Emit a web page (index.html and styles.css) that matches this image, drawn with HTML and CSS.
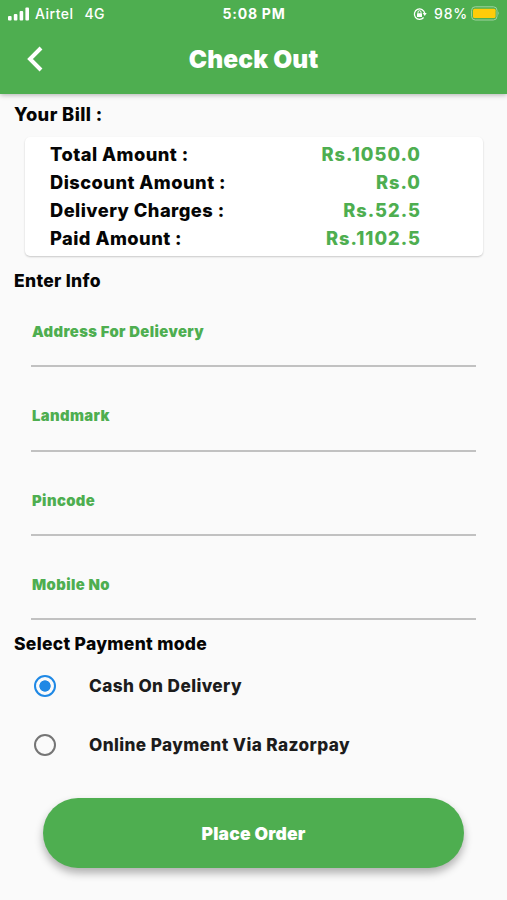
FILE: index.html
```html
<!DOCTYPE html>
<html lang="en">
<head>
    <meta charset="UTF-8">
    <meta name="viewport" content="width=device-width, initial-scale=1.0">
    <title>Check Out</title>
    <link rel="stylesheet" href="styles.css">
</head>
<body>
    <header>
        <div class="status-bar">
            <div class="status-left">
                <svg class="signal" width="22" height="14" viewBox="0 0 22 14" fill="#fff">
                    <rect x="0" y="9" width="3.6" height="4.5" rx="1"/>
                    <rect x="5.8" y="7" width="3.6" height="6.5" rx="1"/>
                    <rect x="11.6" y="4" width="3.6" height="9.5" rx="1"/>
                    <rect x="17.4" y="0.5" width="3.6" height="13" rx="1"/>
                </svg>
                <span class="carrier">Airtel</span>
                <span class="network">4G</span>
            </div>
            <span class="clock">5:08 PM</span>
            <div class="status-right">
                <svg class="lock" width="14" height="14" viewBox="0 0 14 14" fill="none" stroke="#fff">
                    <path d="M10.6 10.5A5.2 5.2 0 1 1 11.7 6.2" stroke-width="1.3"/>
                    <path d="M9.7 6.1H13.7L11.7 8.9Z" fill="#fff" stroke="none"/>
                    <rect x="4" y="6.3" width="5" height="3.6" rx="0.5" fill="#fff" stroke="none"/>
                    <path d="M5 6.5V5.2A1.5 1.5 0 0 1 8 5.2V6.5" stroke-width="1"/>
                </svg>
                <span class="percent">98%</span>
                <svg class="battery" width="29" height="15" viewBox="0 0 29 15">
                    <rect x="0.6" y="0.8" width="25.4" height="13.2" rx="3.6" fill="none" stroke="#a0d2a0" stroke-width="1"/>
                    <rect x="2" y="2.8" width="22.6" height="9.2" rx="1.5" fill="#ffcc0a"/>
                    <path d="M27.2 5.3Q29 7.4 27.2 9.5Z" fill="#a0d2a0"/>
                </svg>
            </div>
        </div>
        <div class="title-bar">
            <svg class="back" width="18" height="26" viewBox="0 0 18 26">
                <path d="M15 2L4 13L15 24" fill="none" stroke="#fff" stroke-width="4"/>
            </svg>
            <h1>Check Out</h1>
        </div>
    </header>

    <main>
        <h2 class="bill-title">Your Bill :</h2>
        <section class="bill">
            <div class="bill-row"><span class="bill-label">Total Amount :</span><span class="bill-value">Rs.1050.0</span></div>
            <div class="bill-row"><span class="bill-label">Discount Amount :</span><span class="bill-value">Rs.0</span></div>
            <div class="bill-row"><span class="bill-label">Delivery Charges :</span><span class="bill-value">Rs.52.5</span></div>
            <div class="bill-row"><span class="bill-label">Paid Amount :</span><span class="bill-value">Rs.1102.5</span></div>
        </section>

        <h2 class="info-title">Enter Info</h2>
        <section class="fields">
            <div class="field">Address For Delievery</div>
            <div class="field">Landmark</div>
            <div class="field">Pincode</div>
            <div class="field">Mobile No</div>
        </section>

        <h2 class="payment-title">Select Payment mode</h2>
        <section class="payment">
            <div class="option">
                <span class="radio selected"></span>
                <span>Cash On Delivery</span>
            </div>
            <div class="option">
                <span class="radio"></span>
                <span>Online Payment Via Razorpay</span>
            </div>
        </section>

        <button class="place-order">Place Order</button>
    </main>
</body>
</html>
```
FILE: styles.css
```css
* {
    box-sizing: border-box;
}

body {
    font-family: Inter, "Liberation Sans", sans-serif;
    margin: 0;
    height: 900px;
    background-color: #fafafa;
    color: #050505;
    overflow: hidden;
}

header {
    height: 94px;
    background-color: #4eae50;
    color: #fff;
    box-shadow: 0 1px 5px rgba(0, 0, 0, 0.3);
}

.status-bar {
    display: grid;
    grid-template-columns: 1fr auto 1fr;
    align-items: center;
    height: 27px;
    padding: 0 7px 0 8px;
    font-size: 15px;
    font-weight: 500;
}

.status-left,
.status-right {
    display: flex;
    align-items: center;
}

.status-right {
    justify-content: flex-end;
}

.carrier {
    margin-left: 5px;
    font-size: 14px;
    letter-spacing: 0.5px;
}

.network {
    margin-left: 11px;
    font-size: 14px;
    letter-spacing: 0.3px;
}

.clock {
    font-size: 14px;
    font-weight: 700;
    letter-spacing: 0.75px;
}

.percent {
    margin: 0 3px 0 7px;
    font-size: 14px;
    letter-spacing: 0.8px;
}

.title-bar {
    display: grid;
    grid-template-columns: 60px 1fr 60px;
    align-items: center;
    height: 64px;
}

.back {
    margin-left: 26px;
}

h1 {
    margin: 0;
    text-align: center;
    font-size: 24.5px;
    font-weight: 900;
    line-height: 30px;
    letter-spacing: 0.15px;
}

h2 {
    margin: 0 0 0 14px;
    font-size: 17.5px;
    font-weight: 800;
    line-height: 24px;
    letter-spacing: 0.3px;
}

.bill-title {
    padding-top: 8px;
    font-size: 18.3px;
    letter-spacing: 0.4px;
}

.bill {
    margin: 11px 24px 0 25px;
    height: 119px;
    padding: 3px 63px 0 25px;
    background-color: #fff;
    border-radius: 5px;
    box-shadow: 0 1px 2px rgba(0, 0, 0, 0.2);
}

.bill-row {
    display: flex;
    justify-content: space-between;
    height: 28px;
    line-height: 28px;
    font-size: 18.3px;
    font-weight: 800;
    letter-spacing: 0.45px;
}

.bill-value {
    color: #4eae50;
    letter-spacing: 1px;
    margin-right: -1px;
}

.info-title {
    margin-top: 13px;
}

.fields {
    margin: 22px 31px 0;
}

.field {
    height: 52.4px;
    margin-bottom: 31.9px;
    padding-left: 1px;
    border-bottom: 2px solid #c1c1c1;
    color: #4eae50;
    font-size: 14.8px;
    font-weight: 900;
    letter-spacing: 0.4px;
    line-height: 34px;
}

.field:last-child {
    margin-bottom: 0;
}

.payment-title {
    margin-top: 12px;
}

.option {
    display: flex;
    align-items: center;
    gap: 33px;
    height: 59px;
    padding-left: 34px;
    color: #1c1c1c;
    font-size: 17.2px;
    font-weight: 800;
    letter-spacing: 0.4px;
}

.radio {
    width: 22px;
    height: 22px;
    border: 2px solid #757575;
    border-radius: 50%;
}

.radio.selected {
    border-color: #1e88e5;
    background: radial-gradient(circle, #1e88e5 5.3px, transparent 6px);
}

.place-order {
    display: block;
    width: 421px;
    height: 70px;
    margin: 24px 0 0 43px;
    border: none;
    border-radius: 35px;
    background-color: #4eae50;
    box-shadow: 0 5px 8px rgba(0, 0, 0, 0.3);
    color: #fff;
    font-family: inherit;
    font-size: 17.5px;
    font-weight: 900;
    letter-spacing: 0.2px;
}
```
